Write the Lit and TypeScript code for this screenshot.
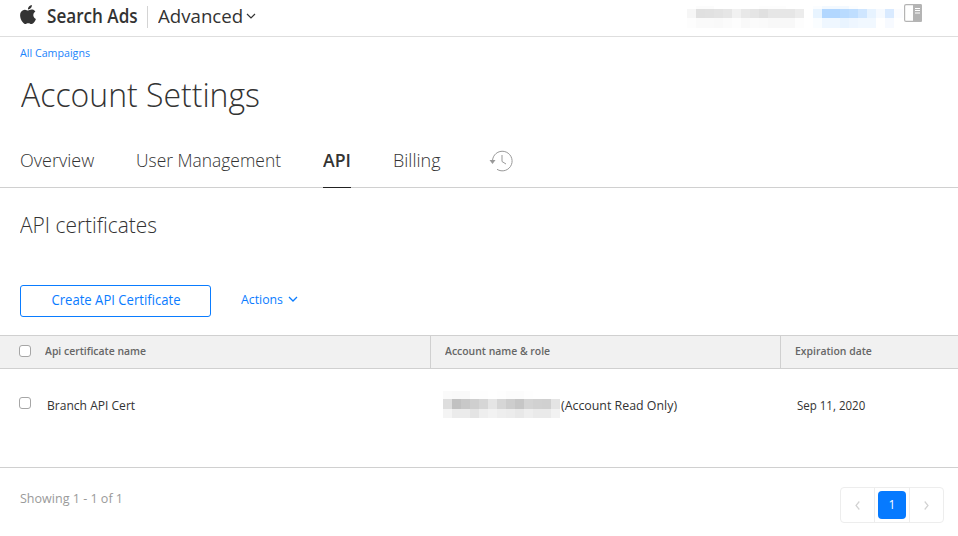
import { LitElement, html, svg, css } from "lit";
import { customElement, property } from "lit/decorators.js";

const chevron = (w: number, h: number, width = 1.2) => html`<svg width=${w} height=${h} viewBox="0 0 10 6">
  ${svg`<path d="M1 1l4 4 4-4" fill="none" stroke="currentColor" stroke-width=${width} />`}
</svg>`;

/** Grid of flat colour cells that hides a private value. */
@customElement("redacted-strip")
class RedactedStrip extends LitElement {
  @property({ attribute: false }) rows: { h: number; cells: string[] }[] = [];

  static styles = css`
    :host { display: block; flex: none; }
    .row { display: flex; }
    .cell { width: 9px; flex: none; }
  `;

  render() {
    return this.rows.map(
      (r) => html`<div class="row" style="height:${r.h}px">
        ${r.cells.map((c) => html`<div class="cell" style="background:#${c}"></div>`)}
      </div>`
    );
  }
}

const list = (s: string) => s.split(" ");

const accountStrip = [
  { h: 3, cells: list("fff fcfcfc fcfcfc fff fff fff fff fff fdfdfd fdfdfd fdfdfd fff fff") },
  { h: 9, cells: list("f6f6f6 e0e0e0 e1e1e1 e3e3e3 e6e6e6 f1f1f1 e8e8e8 e5e5e5 e0e0e0 e6e6e6 e6e6e6 e6e6e6 ececec") },
  { h: 10, cells: list("fdfdfd fafafa fafafa f9f9f9 fbfbfb fdfdfd f9f9f9 fbfbfb fafafa f8f8f8 f8f8f8 f8f8f8 fdfdfd") },
];

const userStrip = [
  { h: 3, cells: list("fbfdff f3f9ff f3f9ff f3f9ff fbfdff fff fff fff fff fff") },
  { h: 9, cells: list("e8f4ff b2d7ff b2d7ff b9dbff bfdeff cfe6ff e7f3ff f6faff d9eaff fbfcff") },
  { h: 10, cells: list("fafdff eff7ff eff7ff e9f4ff eef6ff f1f8ff f1f8ff fff f7faff fff") },
];

const roleStrip = [
  { h: 8, cells: list("fafafa f9f9f9 f9f9f9 fefefe fefefe fff fefefe fcfcfc fcfcfc fefefe fff fff fff") },
  { h: 10, cells: list("dedede c1c1c1 c8c8c8 cfcfcf d6d6d6 e5e5e5 d6d6d6 cdcdcd c6c6c6 d4d4d4 d1d1d1 d0d0d0 e4e4e4") },
  { h: 9, cells: list("f4f4f4 ebebeb ebebeb e4e4e4 eee f2f2f2 eee ececec e8e8e8 eee eaeaea eaeaea f2f2f2") },
];

@customElement("app-root")
class AppRoot extends LitElement {
  static styles = css`
    :host {
      display: block;
      height: 536px;
      overflow: hidden;
      background: #fff;
      color: #333;
      font-family: "Open Sans", sans-serif;
      font-size: 13px;
      white-space: nowrap;
    }
    * { box-sizing: border-box; }
    svg { display: block; flex: none; }
    h1, h2 { margin: 0; font-weight: 300; }

    /* Condenses the letterforms by the --fit factor. */
    .fit {
      display: block;
      width: max-content;
      flex: none;
      transform: scaleX(var(--fit, 1));
      transform-origin: 0 50%;
    }

    header {
      display: flex;
      height: 37px;
      padding: 0 36px 0 20px;
      border-bottom: 1px solid #dedede;
    }
    .apple { margin-top: 5px; }
    .brand {
      --fit: 0.9;
      margin-left: 10.5px;
      width: 90px;
      font-size: 19px;
      font-weight: 600;
      line-height: 32px;
    }
    .divider { width: 1px; height: 22px; margin: 6px 10px 0 10.5px; background: #d4d4d4; }
    .product {
      --fit: 0.982;
      display: flex;
      align-items: center;
      gap: 1px;
      height: 32px;
      font-size: 19px;
    }
    .account { display: flex; margin-left: auto; }
    .account redacted-strip { margin-top: 6px; }
    .account redacted-strip + redacted-strip { margin-left: 9px; }
    .panel { margin: 4px 0 0 1px; }

    .crumb {
      --fit: 0.97;
      margin: 6px 0 0 20px;
      line-height: 20px;
      font-size: 11px;
      color: #1b84fb;
    }
    h1 {
      --fit: 0.954;
      margin: 11px 0 0 21px;
      font-size: 33.5px;
      line-height: 40px;
    }
    nav {
      display: flex;
      height: 53px;
      margin-top: 21px;
      padding-left: 20px;
      border-bottom: 1px solid #d0d0d0;
      font-size: 18px;
      font-weight: 300;
      line-height: 50px;
    }
    .tab { height: 53px; flex: none; }
    .overview { width: 116px; }
    .users { --fit: 0.968; width: 187px; }
    .api { --fit: 0.98; width: 28px; border-bottom: 1px solid #222; font-weight: 600; }
    .billing { width: 97px; padding-left: 42px; }
    .history { margin: 15px 0 0 41px; }

    h2 {
      --fit: 0.95;
      margin: 16px 0 0 20px;
      font-size: 22px;
      line-height: 40px;
    }
    .toolbar { display: flex; align-items: center; margin: 41px 0 0 20px; color: #0a7cff; }
    .create {
      --fit: 0.935;
      display: flex;
      justify-content: center;
      width: 191px;
      height: 32px;
      border: 1px solid #0a7cff;
      border-radius: 3px;
      font-size: 14px;
      line-height: 28px;
    }
    .create .fit { transform-origin: 50% 50%; }
    .actions {
      --fit: 0.946;
      display: flex;
      align-items: center;
      gap: 3px;
      margin-left: 30px;
      line-height: 28px;
      padding-bottom: 4px;
    }

    .grid { display: grid; grid-template-columns: 430px 350px 1fr; }
    .head {
      --fit: 0.947;
      height: 34px;
      margin-top: 18px;
      border: solid #d0d0d0;
      border-width: 1px 0;
      background: #f1f1f1;
      color: #666;
      font-size: 11px;
      font-weight: 600;
      line-height: 30px;
    }
    .head > * + * { border-left: 1px solid #d0d0d0; padding-left: 14px; }
    .first { display: flex; padding-left: 19px; }
    .box {
      width: 12px;
      height: 12px;
      margin-top: 9px;
      border: 1px solid #a6a6a6;
      border-radius: 3px;
      background: #fff;
    }
    .head .label { margin-left: 14px; }
    .record { height: 99px; border-bottom: 1px solid #d0d0d0; line-height: 20px; }
    .record .box { margin-top: 28px; }
    .record .label { --fit: 0.928; margin: 26px 0 0 15.5px; }
    .role { --fit: 0.952; display: flex; padding-left: 13px; }
    .role redacted-strip { margin-top: 22px; }
    .role .fit { margin: 26px 0 0 1px; }
    .date { --fit: 0.885; padding: 26px 0 0 17px; }

    footer { display: flex; justify-content: space-between; padding: 19px 14px 0 20px; }
    .count { --fit: 0.964; margin-top: 2px; line-height: 18px; color: #9a9a9a; }
    .pager {
      display: flex;
      width: 104px;
      height: 36px;
      border: 1px solid #ededed;
      border-radius: 4px;
      color: #d2d2d2;
    }
    .slot { display: flex; flex: 1; align-items: center; justify-content: center; }
    .slot + .slot { border-left: 1px solid #ededed; }
    .current {
      width: 28px;
      height: 28px;
      border-radius: 4px;
      background: #067aff;
      color: #fff;
      font-size: 12px;
      line-height: 27px;
      text-align: center;
    }
  `;

  render() {
    return html`
      <header>
        <svg class="apple" width="16" height="19" viewBox="2.1 0 19.8 24" preserveAspectRatio="none">
          <path fill="#333" d="M12.152 6.896c-.948 0-2.415-1.078-3.96-1.04-2.04.027-3.91 1.183-4.961 3.014-2.117 3.675-.546 9.103 1.519 12.09 1.013 1.454 2.208 3.09 3.792 3.039 1.52-.065 2.09-.987 3.935-.987 1.831 0 2.35.987 3.96.948 1.637-.026 2.676-1.48 3.676-2.948 1.156-1.688 1.636-3.325 1.662-3.415-.039-.013-3.182-1.221-3.22-4.857-.026-3.04 2.48-4.494 2.597-4.559-1.429-2.09-3.623-2.324-4.39-2.376-2-.156-3.675 1.09-4.61 1.09zM15.53 3.83c.843-1.012 1.4-2.427 1.245-3.83-1.207.052-2.662.805-3.532 1.818-.78.896-1.454 2.338-1.273 3.714 1.338.104 2.715-.688 3.559-1.701"/>
        </svg>
        <div class="brand"><span class="fit">Search Ads</span></div>
        <div class="divider"></div>
        <div class="product"><span class="fit">Advanced</span>${chevron(10, 6)}</div>
        <div class="account">
          <redacted-strip .rows=${accountStrip}></redacted-strip>
          <redacted-strip .rows=${userStrip}></redacted-strip>
          <svg class="panel" width="18" height="18" viewBox="0 0 18 18">
            <rect x=".6" y=".6" width="16.8" height="16.8" rx="1.5" fill="#fff" stroke="#b4b4b4" stroke-width="1.2"/>
            <path d="M9 0h7.5A1.5 1.5 0 0 1 18 1.5v15a1.5 1.5 0 0 1-1.5 1.5H9z" fill="#b4b4b4"/>
            <path d="M11 4.500h5M11 6.500h5M11 9h5" stroke="#fff"/>
          </svg>
        </div>
      </header>
      <a class="crumb fit">All Campaigns</a>
      <h1 class="fit">Account Settings</h1>
      <nav>
        <div class="tab overview">Overview</div>
        <div class="tab users"><span class="fit">User Management</span></div>
        <div class="tab api"><span class="fit">API</span></div>
        <div class="tab billing">Billing</div>
        <svg class="history" width="24" height="22" viewBox="0 0 24 22" fill="none" stroke="#999">
          <path d="M3.500 11A9.800 9.800 0 1 1 8 19.300"/>
          <path d="M13 5v6.500l4 2.500"/>
          <path d="M.5 10h6l-3 4z" fill="#999" stroke="none"/>
        </svg>
      </nav>
      <h2 class="fit">API certificates</h2>
      <div class="toolbar">
        <div class="create"><span class="fit">Create API Certificate</span></div>
        <div class="actions"><span class="fit">Actions</span>${chevron(10, 6, 1.3)}</div>
      </div>
      <div class="grid head">
        <div class="first"><div class="box"></div><span class="label fit">Api certificate name</span></div>
        <div><span class="fit">Account name &amp; role</span></div>
        <div><span class="fit">Expiration date</span></div>
      </div>
      <div class="grid record">
        <div class="first"><div class="box"></div><span class="label fit">Branch API Cert</span></div>
        <div class="role"><redacted-strip .rows=${roleStrip}></redacted-strip><span class="fit">(Account Read Only)</span></div>
        <div class="date"><span class="fit">Sep 11, 2020</span></div>
      </div>
      <footer>
        <div class="count fit">Showing 1 - 1 of 1</div>
        <div class="pager">
          <div class="slot"><svg width="5" height="9" viewBox="0 0 5 9"><path d="M4.300.5l-3.300 4 3.300 4" fill="none" stroke="currentColor" stroke-width="1.200"/></svg></div>
          <div class="slot"><div class="current">1</div></div>
          <div class="slot"><svg width="5" height="9" viewBox="0 0 5 9"><path d="M.7.5l3.300 4-3.300 4" fill="none" stroke="currentColor" stroke-width="1.200"/></svg></div>
        </div>
      </footer>
    `;
  }
}
